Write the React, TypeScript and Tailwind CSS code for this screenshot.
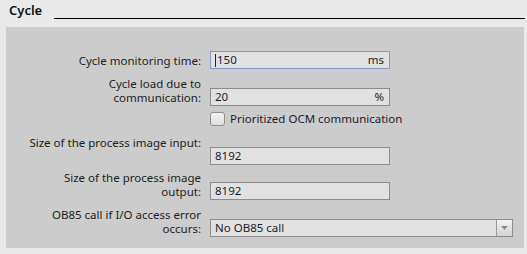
import React from 'react';

const font = { fontFamily: '"Segoe UI", "Noto Sans", sans-serif' };

function Field({ value, unit, focused }: { value: string; unit?: string; focused?: boolean }) {
  return (
    <div
      className={`flex h-[18px] w-[180px] items-center justify-between border bg-[#e1e1e1] pl-[4px] pr-[5px] text-[11.5px] leading-none text-[#1c1c2a] ${
        focused ? 'border-[#8398c4]' : 'border-[#8c8c8c]'
      }`}
    >
      <span className="flex items-center">
        {focused && <span className="mr-px h-[13px] w-px bg-[#222]" />}
        {value}
      </span>
      {unit && <span>{unit}</span>}
    </div>
  );
}

function Label({ children }: { children: React.ReactNode }) {
  return <div className="mb-[1px] text-right text-[11.5px] leading-[14px] text-[#1d1d1d]">{children}</div>;
}

export default function App() {
  return (
    <div className="h-[254px] w-[527px] bg-[#e9e9e9]" style={font}>
      {/* Section header */}
      <div className="flex items-end pl-[9px] pr-[2px] pt-[3px]">
        <span className="text-[13px] font-semibold leading-[15px] text-[#111]">Cycle</span>
        <div className="mb-[-1px] ml-[12px] h-px flex-1 bg-black" />
      </div>

      {/* Panel */}
      <div className="ml-[6px] mt-[9px] h-[221px] w-[518px] bg-[#cccccc] pt-[24px]">
        <div className="grid grid-cols-[195px_auto] items-end gap-x-[9px]">
          <Label>Cycle monitoring time:</Label>
          <Field value="150" unit="ms" focused />
        </div>

        <div className="mt-[8px] grid grid-cols-[195px_auto] items-end gap-x-[9px]">
          <Label>
            Cycle load due to
            <br />
            communication:
          </Label>
          <Field value="20" unit="%" />
        </div>

        <div className="mt-[6px] grid grid-cols-[195px_auto] gap-x-[9px]">
          <div />
          <label className="flex items-center gap-[5px] text-[11.5px] leading-none text-[#221a2e]">
            <span className="h-[14px] w-[15px] rounded-[3px] border border-[#8e8e8e] bg-gradient-to-b from-[#f4f4f4] to-[#dedede]" />
            Prioritized OCM communication
          </label>
        </div>

        <div className="mt-[10px] grid grid-cols-[195px_auto] gap-x-[9px]">
          <Label>Size of the process image input:</Label>
          <div />
          <div />
          <div className="-mt-[4px]">
            <Field value="8192" />
          </div>
        </div>

        <div className="mt-[6px] grid grid-cols-[195px_auto] items-end gap-x-[9px]">
          <Label>
            Size of the process image
            <br />
            output:
          </Label>
          <Field value="8192" />
        </div>

        <div className="mt-[8px] grid grid-cols-[195px_auto] items-end gap-x-[9px]">
          <Label>
            OB85 call if I/O access error
            <br />
            occurs:
          </Label>
          <div className="flex h-[18px] w-[303px] items-center border border-[#8c8c8c] bg-[#e1e1e1] text-[11.5px] leading-none text-[#1c1c2a]">
            <span className="flex-1 pl-[4px]">No OB85 call</span>
            <span className="flex h-full w-[16px] items-center justify-center border-l border-[#9a9a9a] bg-gradient-to-b from-[#f2f2f2] to-[#d4d4d4]">
              <svg width="7" height="4" viewBox="0 0 7 4">
                <path d="M0 0h7L3.5 4z" fill="#8a8a8a" />
              </svg>
            </span>
          </div>
        </div>
      </div>
    </div>
  );
}
